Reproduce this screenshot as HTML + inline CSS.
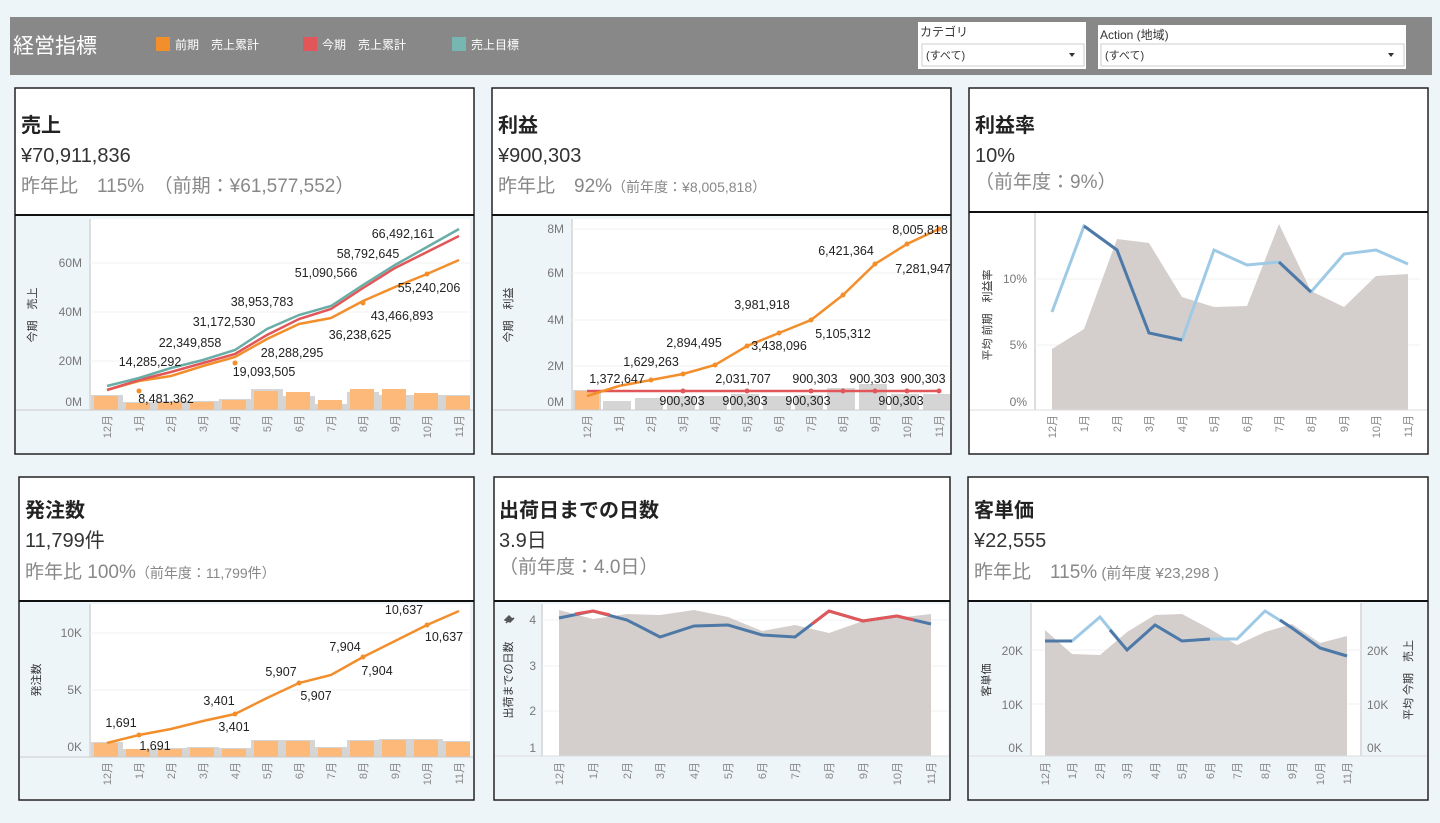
<!DOCTYPE html>
<html><head><meta charset="utf-8"><style>
body{margin:0;background:#eef5f9;}
svg{display:block;font-family:"Liberation Sans","Noto Sans CJK JP",sans-serif;}
.m{font-size:11px;fill:#888;}
.ax{font-size:12px;fill:#777;}
.lb{font-size:12.5px;fill:#222;}
.yt{font-size:11px;fill:#333;}
</style></head><body>
<svg width="1440" height="823" viewBox="0 0 1440 823">
<rect width="1440" height="823" fill="#eef5f9"/>
<!-- header -->
<rect x="10" y="17" width="1422" height="58" fill="#888"/>
<text x="13" y="53" font-size="21" fill="#fff">経営指標</text>
<rect x="156" y="37" width="14" height="14" fill="#f28e2b"/><text x="175" y="49" font-size="12" fill="#fff">前期　売上累計</text>
<rect x="303" y="37" width="14" height="14" fill="#e15759"/><text x="322" y="49" font-size="12" fill="#fff">今期　売上累計</text>
<rect x="452" y="37" width="14" height="14" fill="#76b7b2"/><text x="471" y="49" font-size="12" fill="#fff">売上目標</text>
<rect x="918" y="22" width="168" height="47" fill="#fff"/>
<text x="920" y="36" font-size="12" fill="#333">カテゴリ</text>
<rect x="922" y="44" width="162" height="22" fill="#fff" stroke="#ccc"/>
<text x="926" y="59" font-size="11" fill="#333">(すべて)</text><path d="M1069 53l6 0-3 4z" fill="#333"/>
<rect x="1098" y="25" width="308" height="44" fill="#fff"/>
<text x="1100" y="39" font-size="12" fill="#333">Action (地域)</text>
<rect x="1101" y="44" width="303" height="22" fill="#fff" stroke="#ccc"/>
<text x="1105" y="59" font-size="11" fill="#333">(すべて)</text><path d="M1388 53l6 0-3 4z" fill="#333"/>

<!-- ============ PANEL 1 ============ -->
<rect x="15" y="88" width="459" height="366" fill="#fff" stroke="#222" stroke-width="1.5"/>
<text x="21" y="132" font-size="20" font-weight="bold" fill="#222">売上</text>
<text x="21" y="162" font-size="20" fill="#333">¥70,911,836</text>
<text x="21" y="192" font-size="19" fill="#888">昨年比　115%　（前期：¥61,577,552）</text>
<rect x="16" y="215" width="457" height="238" fill="#eef5f9"/>
<line x1="15" y1="215" x2="474" y2="215" stroke="#111" stroke-width="2"/>
<rect x="90" y="219" width="380" height="191" fill="#fff"/>
<line x1="90" y1="219" x2="90" y2="410" stroke="#ddd" stroke-width="2"/>
<g stroke="#f0f0f0"><line x1="90" y1="263" x2="470" y2="263"/><line x1="90" y1="312" x2="470" y2="312"/><line x1="90" y1="361" x2="470" y2="361"/></g>
<g class="ax" text-anchor="end"><text x="82" y="267">60M</text><text x="82" y="316">40M</text><text x="82" y="365">20M</text><text x="82" y="406">0M</text></g>
<text class="yt" transform="rotate(-90 36 315)" x="36" y="315" text-anchor="middle">今期　売上</text>
<g fill="#d5d5d5"><rect x="91" y="395" width="32" height="15"/><rect x="123" y="402" width="32" height="8"/><rect x="155" y="401" width="32" height="9"/><rect x="187" y="401" width="32" height="9"/><rect x="219" y="399" width="32" height="11"/><rect x="251" y="389" width="32" height="21"/><rect x="283" y="396" width="32" height="14"/><rect x="315" y="404" width="32" height="6"/><rect x="347" y="392" width="32" height="18"/><rect x="379" y="395" width="32" height="15"/><rect x="411" y="395" width="32" height="15"/><rect x="443" y="395" width="27" height="15"/></g>
<g fill="#fdb97a"><rect x="94" y="396" width="24" height="14"/><rect x="126" y="403" width="24" height="7"/><rect x="158" y="402" width="24" height="8"/><rect x="190" y="402" width="24" height="8"/><rect x="222" y="400" width="24" height="10"/><rect x="254" y="391" width="24" height="19"/><rect x="286" y="392" width="24" height="18"/><rect x="318" y="400" width="24" height="10"/><rect x="350" y="389" width="24" height="21"/><rect x="382" y="389" width="24" height="21"/><rect x="414" y="393" width="24" height="17"/><rect x="446" y="396" width="24" height="14"/></g>
<line x1="16" y1="410" x2="473" y2="410" stroke="#ccc"/>
<polyline points="107,390 139,381 171,376 203,366 235,357 267,339 299,324 331,318 363,301 395,287 427,274 459,260" fill="none" stroke="#f28e2b" stroke-width="2.5"/>
<polyline points="107,390 139,380 171,372 203,363 235,354 267,335 299,319 331,309 363,288 395,268 427,252 459,236" fill="none" stroke="#e15759" stroke-width="2.5"/>
<polyline points="107,386 139,378 171,368 203,360 235,350 267,329 299,315 331,306 363,285 395,265 427,247 459,229" fill="none" stroke="#6aada7" stroke-width="2.5"/>
<g fill="#f28e2b"><circle cx="139" cy="391" r="2.5"/><circle cx="235" cy="363" r="2.5"/><circle cx="363" cy="303" r="2.5"/><circle cx="427" cy="274" r="2.5"/></g>
<g class="lb" text-anchor="middle"><text x="150" y="366">14,285,292</text><text x="166" y="403">8,481,362</text><text x="190" y="347">22,349,858</text><text x="224" y="326">31,172,530</text><text x="264" y="376">19,093,505</text><text x="262" y="306">38,953,783</text><text x="292" y="357">28,288,295</text><text x="326" y="277">51,090,566</text><text x="360" y="339">36,238,625</text><text x="368" y="258">58,792,645</text><text x="402" y="320">43,466,893</text><text x="403" y="238">66,492,161</text><text x="429" y="292">55,240,206</text></g>
<g class="m" text-anchor="end"><text transform="rotate(-90 111 415)" x="111" y="415">12月</text><text transform="rotate(-90 143 415)" x="143" y="415">1月</text><text transform="rotate(-90 175 415)" x="175" y="415">2月</text><text transform="rotate(-90 207 415)" x="207" y="415">3月</text><text transform="rotate(-90 239 415)" x="239" y="415">4月</text><text transform="rotate(-90 271 415)" x="271" y="415">5月</text><text transform="rotate(-90 303 415)" x="303" y="415">6月</text><text transform="rotate(-90 335 415)" x="335" y="415">7月</text><text transform="rotate(-90 367 415)" x="367" y="415">8月</text><text transform="rotate(-90 399 415)" x="399" y="415">9月</text><text transform="rotate(-90 431 415)" x="431" y="415">10月</text><text transform="rotate(-90 463 415)" x="463" y="415">11月</text></g>

<!-- ============ PANEL 2 ============ -->
<rect x="492" y="88" width="459" height="366" fill="#fff" stroke="#222" stroke-width="1.5"/>
<text x="498" y="132" font-size="20" font-weight="bold" fill="#222">利益</text>
<text x="498" y="162" font-size="20" fill="#333">¥900,303</text>
<text x="498" y="192" font-size="19" fill="#888">昨年比　92%<tspan font-size="14">（前年度：¥8,005,818）</tspan></text>
<rect x="493" y="215" width="457" height="238" fill="#eef5f9"/>
<line x1="492" y1="215" x2="951" y2="215" stroke="#111" stroke-width="2"/>
<rect x="572" y="219" width="378" height="191" fill="#fff"/>
<line x1="572" y1="219" x2="572" y2="410" stroke="#ddd" stroke-width="2"/>
<g stroke="#f0f0f0"><line x1="572" y1="229" x2="950" y2="229"/><line x1="572" y1="273" x2="950" y2="273"/><line x1="572" y1="320" x2="950" y2="320"/><line x1="572" y1="366" x2="950" y2="366"/></g>
<g class="ax" text-anchor="end"><text x="564" y="233">8M</text><text x="564" y="277">6M</text><text x="564" y="324">4M</text><text x="564" y="370">2M</text><text x="564" y="406">0M</text></g>
<text class="yt" transform="rotate(-90 512 315)" x="512" y="315" text-anchor="middle">今期　利益</text>
<g fill="#d5d5d5"><rect x="573" y="390" width="28" height="20"/><rect x="603" y="401" width="28" height="9"/><rect x="635" y="398" width="28" height="12"/><rect x="667" y="396" width="28" height="14"/><rect x="699" y="396" width="28" height="14"/><rect x="731" y="394" width="28" height="16"/><rect x="763" y="396" width="28" height="14"/><rect x="795" y="395" width="28" height="15"/><rect x="827" y="388" width="28" height="22"/><rect x="859" y="384" width="28" height="26"/><rect x="891" y="394" width="28" height="16"/><rect x="923" y="394" width="27" height="16"/></g>
<rect x="575" y="391" width="24" height="19" fill="#fdb97a"/>
<line x1="493" y1="410" x2="950" y2="410" stroke="#ccc"/>
<polyline points="587,391 619,391 651,391 683,391 715,391 747,391 779,391 811,391 843,391 875,391 907,391 939,391" fill="none" stroke="#e15759" stroke-width="2.5"/>
<g fill="#e15759"><circle cx="683" cy="391" r="2.5"/><circle cx="747" cy="391" r="2.5"/><circle cx="811" cy="391" r="2.5"/><circle cx="843" cy="391" r="2.5"/><circle cx="875" cy="391" r="2.5"/><circle cx="907" cy="391" r="2.5"/><circle cx="939" cy="391" r="2.5"/></g>
<polyline points="587,396 619,386 651,380 683,374 715,365 747,346 779,333 811,320 843,295 875,264 907,244 939,229" fill="none" stroke="#f28e2b" stroke-width="2.5"/>
<g fill="#f28e2b"><circle cx="651" cy="380" r="2.5"/><circle cx="683" cy="374" r="2.5"/><circle cx="715" cy="365" r="2.5"/><circle cx="747" cy="346" r="2.5"/><circle cx="779" cy="333" r="2.5"/><circle cx="811" cy="320" r="2.5"/><circle cx="843" cy="295" r="2.5"/><circle cx="875" cy="264" r="2.5"/><circle cx="907" cy="244" r="2.5"/><circle cx="939" cy="229" r="2.5"/></g>
<g class="lb" text-anchor="middle"><text x="617" y="383">1,372,647</text><text x="651" y="366">1,629,263</text><text x="682" y="405">900,303</text><text x="694" y="347">2,894,495</text><text x="743" y="383">2,031,707</text><text x="745" y="405">900,303</text><text x="762" y="309">3,981,918</text><text x="779" y="350">3,438,096</text><text x="808" y="405">900,303</text><text x="815" y="383">900,303</text><text x="846" y="255">6,421,364</text><text x="843" y="338">5,105,312</text><text x="872" y="383">900,303</text><text x="901" y="405">900,303</text><text x="923" y="383">900,303</text><text x="920" y="234">8,005,818</text><text x="923" y="273">7,281,947</text></g>
<g class="m" text-anchor="end"><text transform="rotate(-90 591 415)" x="591" y="415">12月</text><text transform="rotate(-90 623 415)" x="623" y="415">1月</text><text transform="rotate(-90 655 415)" x="655" y="415">2月</text><text transform="rotate(-90 687 415)" x="687" y="415">3月</text><text transform="rotate(-90 719 415)" x="719" y="415">4月</text><text transform="rotate(-90 751 415)" x="751" y="415">5月</text><text transform="rotate(-90 783 415)" x="783" y="415">6月</text><text transform="rotate(-90 815 415)" x="815" y="415">7月</text><text transform="rotate(-90 847 415)" x="847" y="415">8月</text><text transform="rotate(-90 879 415)" x="879" y="415">9月</text><text transform="rotate(-90 911 415)" x="911" y="415">10月</text><text transform="rotate(-90 943 415)" x="943" y="415">11月</text></g>

<!-- ============ PANEL 3 ============ -->
<rect x="969" y="88" width="459" height="366" fill="#fff" stroke="#222" stroke-width="1.5"/>
<text x="975" y="132" font-size="20" font-weight="bold" fill="#222">利益率</text>
<text x="975" y="162" font-size="20" fill="#333">10%</text>
<text x="975" y="188" font-size="19" fill="#888">（前年度：9%）</text>
<line x1="969" y1="212" x2="1428" y2="212" stroke="#111" stroke-width="2"/>
<rect x="970" y="213" width="457" height="240" fill="#fff"/>
<line x1="1035" y1="213" x2="1035" y2="410" stroke="#ddd" stroke-width="2"/>
<g stroke="#f0f0f0"><line x1="1035" y1="279" x2="1420" y2="279"/><line x1="1035" y1="345" x2="1420" y2="345"/></g>
<g class="ax" text-anchor="end"><text x="1027" y="283">10%</text><text x="1027" y="349">5%</text><text x="1027" y="406">0%</text></g>
<text class="yt" transform="rotate(-90 991 315)" x="991" y="315" text-anchor="middle">平均 前期　利益率</text>
<polygon points="1052,349 1084,329 1117,239 1149,243 1182,297 1214,307 1247,306 1279,224 1311,291 1344,307 1376,276 1408,274 1408,410 1052,410" fill="#d4cfcd"/>
<line x1="970" y1="410" x2="1427" y2="410" stroke="#ddd"/>
<polyline points="1052,312 1084,226 1117,250 1149,333 1182,340 1214,250 1247,265 1279,262 1311,292 1344,254 1376,250 1408,264" fill="none" stroke="#9fcae6" stroke-width="3"/>
<polyline points="1084,226 1117,250 1149,333 1182,340" fill="none" stroke="#4e79a7" stroke-width="3"/>
<polyline points="1279,262 1311,292" fill="none" stroke="#4e79a7" stroke-width="3"/>
<g class="m" text-anchor="end"><text transform="rotate(-90 1056 415)" x="1056" y="415">12月</text><text transform="rotate(-90 1088 415)" x="1088" y="415">1月</text><text transform="rotate(-90 1121 415)" x="1121" y="415">2月</text><text transform="rotate(-90 1153 415)" x="1153" y="415">3月</text><text transform="rotate(-90 1186 415)" x="1186" y="415">4月</text><text transform="rotate(-90 1218 415)" x="1218" y="415">5月</text><text transform="rotate(-90 1251 415)" x="1251" y="415">6月</text><text transform="rotate(-90 1283 415)" x="1283" y="415">7月</text><text transform="rotate(-90 1315 415)" x="1315" y="415">8月</text><text transform="rotate(-90 1348 415)" x="1348" y="415">9月</text><text transform="rotate(-90 1380 415)" x="1380" y="415">10月</text><text transform="rotate(-90 1412 415)" x="1412" y="415">11月</text></g>

<!-- ============ PANEL 4 ============ -->
<rect x="19" y="477" width="455" height="323" fill="#fff" stroke="#222" stroke-width="1.5"/>
<text x="25" y="517" font-size="20" font-weight="bold" fill="#222">発注数</text>
<text x="25" y="547" font-size="20" fill="#333">11,799件</text>
<text x="25" y="578" font-size="19" fill="#888">昨年比 100%<tspan font-size="14">（前年度：11,799件）</tspan></text>
<rect x="20" y="602" width="453" height="197" fill="#eef5f9"/>
<line x1="19" y1="601" x2="474" y2="601" stroke="#111" stroke-width="2"/>
<rect x="90" y="604" width="380" height="153" fill="#fff"/>
<line x1="90" y1="604" x2="90" y2="757" stroke="#ddd" stroke-width="2"/>
<g stroke="#f0f0f0"><line x1="90" y1="633" x2="470" y2="633"/><line x1="90" y1="690" x2="470" y2="690"/></g>
<g class="ax" text-anchor="end"><text x="82" y="637">10K</text><text x="82" y="694">5K</text><text x="82" y="751">0K</text></g>
<text class="yt" transform="rotate(-90 40 680)" x="40" y="680" text-anchor="middle">発注数</text>
<g fill="#d5d5d5"><rect x="91" y="742" width="32" height="15"/><rect x="123" y="749" width="32" height="8"/><rect x="155" y="748" width="32" height="9"/><rect x="187" y="747" width="32" height="10"/><rect x="219" y="748" width="32" height="9"/><rect x="251" y="740" width="32" height="17"/><rect x="283" y="740" width="32" height="17"/><rect x="315" y="747" width="32" height="10"/><rect x="347" y="740" width="32" height="17"/><rect x="379" y="739" width="32" height="18"/><rect x="411" y="739" width="32" height="18"/><rect x="443" y="741" width="27" height="16"/></g>
<g fill="#fdb97a"><rect x="94" y="743" width="24" height="14"/><rect x="126" y="749" width="24" height="8"/><rect x="158" y="749" width="24" height="8"/><rect x="190" y="748" width="24" height="9"/><rect x="222" y="749" width="24" height="8"/><rect x="254" y="741" width="24" height="16"/><rect x="286" y="741" width="24" height="16"/><rect x="318" y="748" width="24" height="9"/><rect x="350" y="741" width="24" height="16"/><rect x="382" y="740" width="24" height="17"/><rect x="414" y="740" width="24" height="17"/><rect x="446" y="742" width="24" height="15"/></g>
<line x1="20" y1="757" x2="473" y2="757" stroke="#ccc"/>
<polyline points="107,743 139,735 171,729 203,721 235,714 267,698 299,683 331,675 363,657 395,641 427,625 459,611" fill="none" stroke="#f28e2b" stroke-width="2.5"/>
<g fill="#f28e2b"><circle cx="139" cy="735" r="2.5"/><circle cx="235" cy="714" r="2.5"/><circle cx="299" cy="683" r="2.5"/><circle cx="363" cy="657" r="2.5"/><circle cx="427" cy="625" r="2.5"/></g>
<g class="lb" text-anchor="middle"><text x="121" y="727">1,691</text><text x="155" y="750">1,691</text><text x="219" y="705">3,401</text><text x="234" y="731">3,401</text><text x="281" y="676">5,907</text><text x="316" y="700">5,907</text><text x="345" y="651">7,904</text><text x="377" y="675">7,904</text><text x="404" y="614">10,637</text><text x="444" y="641">10,637</text></g>
<g class="m" text-anchor="end"><text transform="rotate(-90 111 762)" x="111" y="762">12月</text><text transform="rotate(-90 143 762)" x="143" y="762">1月</text><text transform="rotate(-90 175 762)" x="175" y="762">2月</text><text transform="rotate(-90 207 762)" x="207" y="762">3月</text><text transform="rotate(-90 239 762)" x="239" y="762">4月</text><text transform="rotate(-90 271 762)" x="271" y="762">5月</text><text transform="rotate(-90 303 762)" x="303" y="762">6月</text><text transform="rotate(-90 335 762)" x="335" y="762">7月</text><text transform="rotate(-90 367 762)" x="367" y="762">8月</text><text transform="rotate(-90 399 762)" x="399" y="762">9月</text><text transform="rotate(-90 431 762)" x="431" y="762">10月</text><text transform="rotate(-90 463 762)" x="463" y="762">11月</text></g>

<!-- ============ PANEL 5 ============ -->
<rect x="494" y="477" width="456" height="323" fill="#fff" stroke="#222" stroke-width="1.5"/>
<text x="499" y="517" font-size="20" font-weight="bold" fill="#222">出荷日までの日数</text>
<text x="499" y="547" font-size="20" fill="#333">3.9日</text>
<text x="499" y="573" font-size="19" fill="#888">（前年度：4.0日）</text>
<rect x="495" y="602" width="454" height="197" fill="#eef5f9"/>
<line x1="494" y1="601" x2="950" y2="601" stroke="#111" stroke-width="2"/>
<rect x="542" y="604" width="406" height="152" fill="#fff"/>
<line x1="542" y1="604" x2="542" y2="756" stroke="#ddd" stroke-width="2"/>
<g stroke="#f0f0f0"><line x1="542" y1="620" x2="948" y2="620"/><line x1="542" y1="666" x2="948" y2="666"/><line x1="542" y1="711" x2="948" y2="711"/></g>
<g class="ax" text-anchor="end"><text x="536" y="624">4</text><text x="536" y="670">3</text><text x="536" y="715">2</text><text x="536" y="752">1</text></g>
<text class="yt" transform="rotate(-90 512 680)" x="512" y="680" text-anchor="middle" font-size="12">出荷までの日数</text>
<path d="M505 620l4-4 3 3 2-1-4 4zM506 623l3-3" fill="#555" stroke="#555" stroke-width="1.5"/>
<polygon points="559,610 593,619 627,614 660,615 694,610 728,617 762,631 795,625 829,633 863,621 897,618 931,614 931,756 559,756" fill="#d4cfcd"/>
<line x1="495" y1="756" x2="949" y2="756" stroke="#ddd"/>
<polyline points="559,618 593,611 627,620 660,637 694,626 728,625 762,635 795,637 829,611 863,621 897,616 931,624" fill="none" stroke="#4e79a7" stroke-width="3"/>
<polyline points="575,614 593,611 610,615" fill="none" stroke="#e15759" stroke-width="3"/>
<polyline points="812,624 829,611 863,621 897,616 914,620" fill="none" stroke="#e15759" stroke-width="3"/>
<g class="m" text-anchor="end"><text transform="rotate(-90 563 762)" x="563" y="762">12月</text><text transform="rotate(-90 597 762)" x="597" y="762">1月</text><text transform="rotate(-90 631 762)" x="631" y="762">2月</text><text transform="rotate(-90 664 762)" x="664" y="762">3月</text><text transform="rotate(-90 698 762)" x="698" y="762">4月</text><text transform="rotate(-90 732 762)" x="732" y="762">5月</text><text transform="rotate(-90 766 762)" x="766" y="762">6月</text><text transform="rotate(-90 799 762)" x="799" y="762">7月</text><text transform="rotate(-90 833 762)" x="833" y="762">8月</text><text transform="rotate(-90 867 762)" x="867" y="762">9月</text><text transform="rotate(-90 901 762)" x="901" y="762">10月</text><text transform="rotate(-90 935 762)" x="935" y="762">11月</text></g>

<!-- ============ PANEL 6 ============ -->
<rect x="968" y="477" width="460" height="323" fill="#fff" stroke="#222" stroke-width="1.5"/>
<text x="974" y="517" font-size="20" font-weight="bold" fill="#222">客単価</text>
<text x="974" y="547" font-size="20" fill="#333">¥22,555</text>
<text x="974" y="578" font-size="19" fill="#888">昨年比　115%<tspan font-size="15"> (前年度 ¥23,298 )</tspan></text>
<rect x="969" y="602" width="458" height="197" fill="#eef5f9"/>
<line x1="968" y1="601" x2="1428" y2="601" stroke="#111" stroke-width="2"/>
<rect x="1031" y="603" width="330" height="153" fill="#fff"/>
<line x1="1031" y1="603" x2="1031" y2="756" stroke="#ddd" stroke-width="2"/>
<line x1="1361" y1="603" x2="1361" y2="756" stroke="#ddd" stroke-width="2"/>
<g stroke="#f0f0f0"><line x1="1031" y1="650" x2="1361" y2="650"/><line x1="1031" y1="704" x2="1361" y2="704"/></g>
<g class="ax" text-anchor="end"><text x="1023" y="655">20K</text><text x="1023" y="709">10K</text><text x="1023" y="752">0K</text></g>
<g class="ax"><text x="1367" y="655">20K</text><text x="1367" y="709">10K</text><text x="1367" y="752">0K</text></g>
<text class="yt" transform="rotate(-90 990 680)" x="990" y="680" text-anchor="middle" font-size="12">客単価</text>
<text class="yt" transform="rotate(-90 1412 680)" x="1412" y="680" text-anchor="middle" font-size="12">平均 今期　売上</text>
<polygon points="1045,630 1072,654 1100,655 1127,632 1155,615 1182,614 1210,629 1237,645 1265,632 1292,624 1320,643 1347,636 1347,756 1045,756" fill="#d4cfcd"/>
<line x1="969" y1="756" x2="1427" y2="756" stroke="#ddd"/>
<polyline points="1045,641 1072,641 1100,617 1127,650 1155,625 1182,641 1210,639 1237,639 1265,611 1292,628 1320,648 1347,656" fill="none" stroke="#9fcae6" stroke-width="3"/>
<polyline points="1045,641 1072,641" fill="none" stroke="#4e79a7" stroke-width="3"/>
<polyline points="1110,630 1127,650 1155,625 1182,641 1210,639" fill="none" stroke="#4e79a7" stroke-width="3"/>
<polyline points="1280,620 1292,628 1320,648 1347,656" fill="none" stroke="#4e79a7" stroke-width="3"/>
<g class="m" text-anchor="end"><text transform="rotate(-90 1049 762)" x="1049" y="762">12月</text><text transform="rotate(-90 1076 762)" x="1076" y="762">1月</text><text transform="rotate(-90 1104 762)" x="1104" y="762">2月</text><text transform="rotate(-90 1131 762)" x="1131" y="762">3月</text><text transform="rotate(-90 1159 762)" x="1159" y="762">4月</text><text transform="rotate(-90 1186 762)" x="1186" y="762">5月</text><text transform="rotate(-90 1214 762)" x="1214" y="762">6月</text><text transform="rotate(-90 1241 762)" x="1241" y="762">7月</text><text transform="rotate(-90 1269 762)" x="1269" y="762">8月</text><text transform="rotate(-90 1296 762)" x="1296" y="762">9月</text><text transform="rotate(-90 1324 762)" x="1324" y="762">10月</text><text transform="rotate(-90 1351 762)" x="1351" y="762">11月</text></g>
</svg>
</body></html>
